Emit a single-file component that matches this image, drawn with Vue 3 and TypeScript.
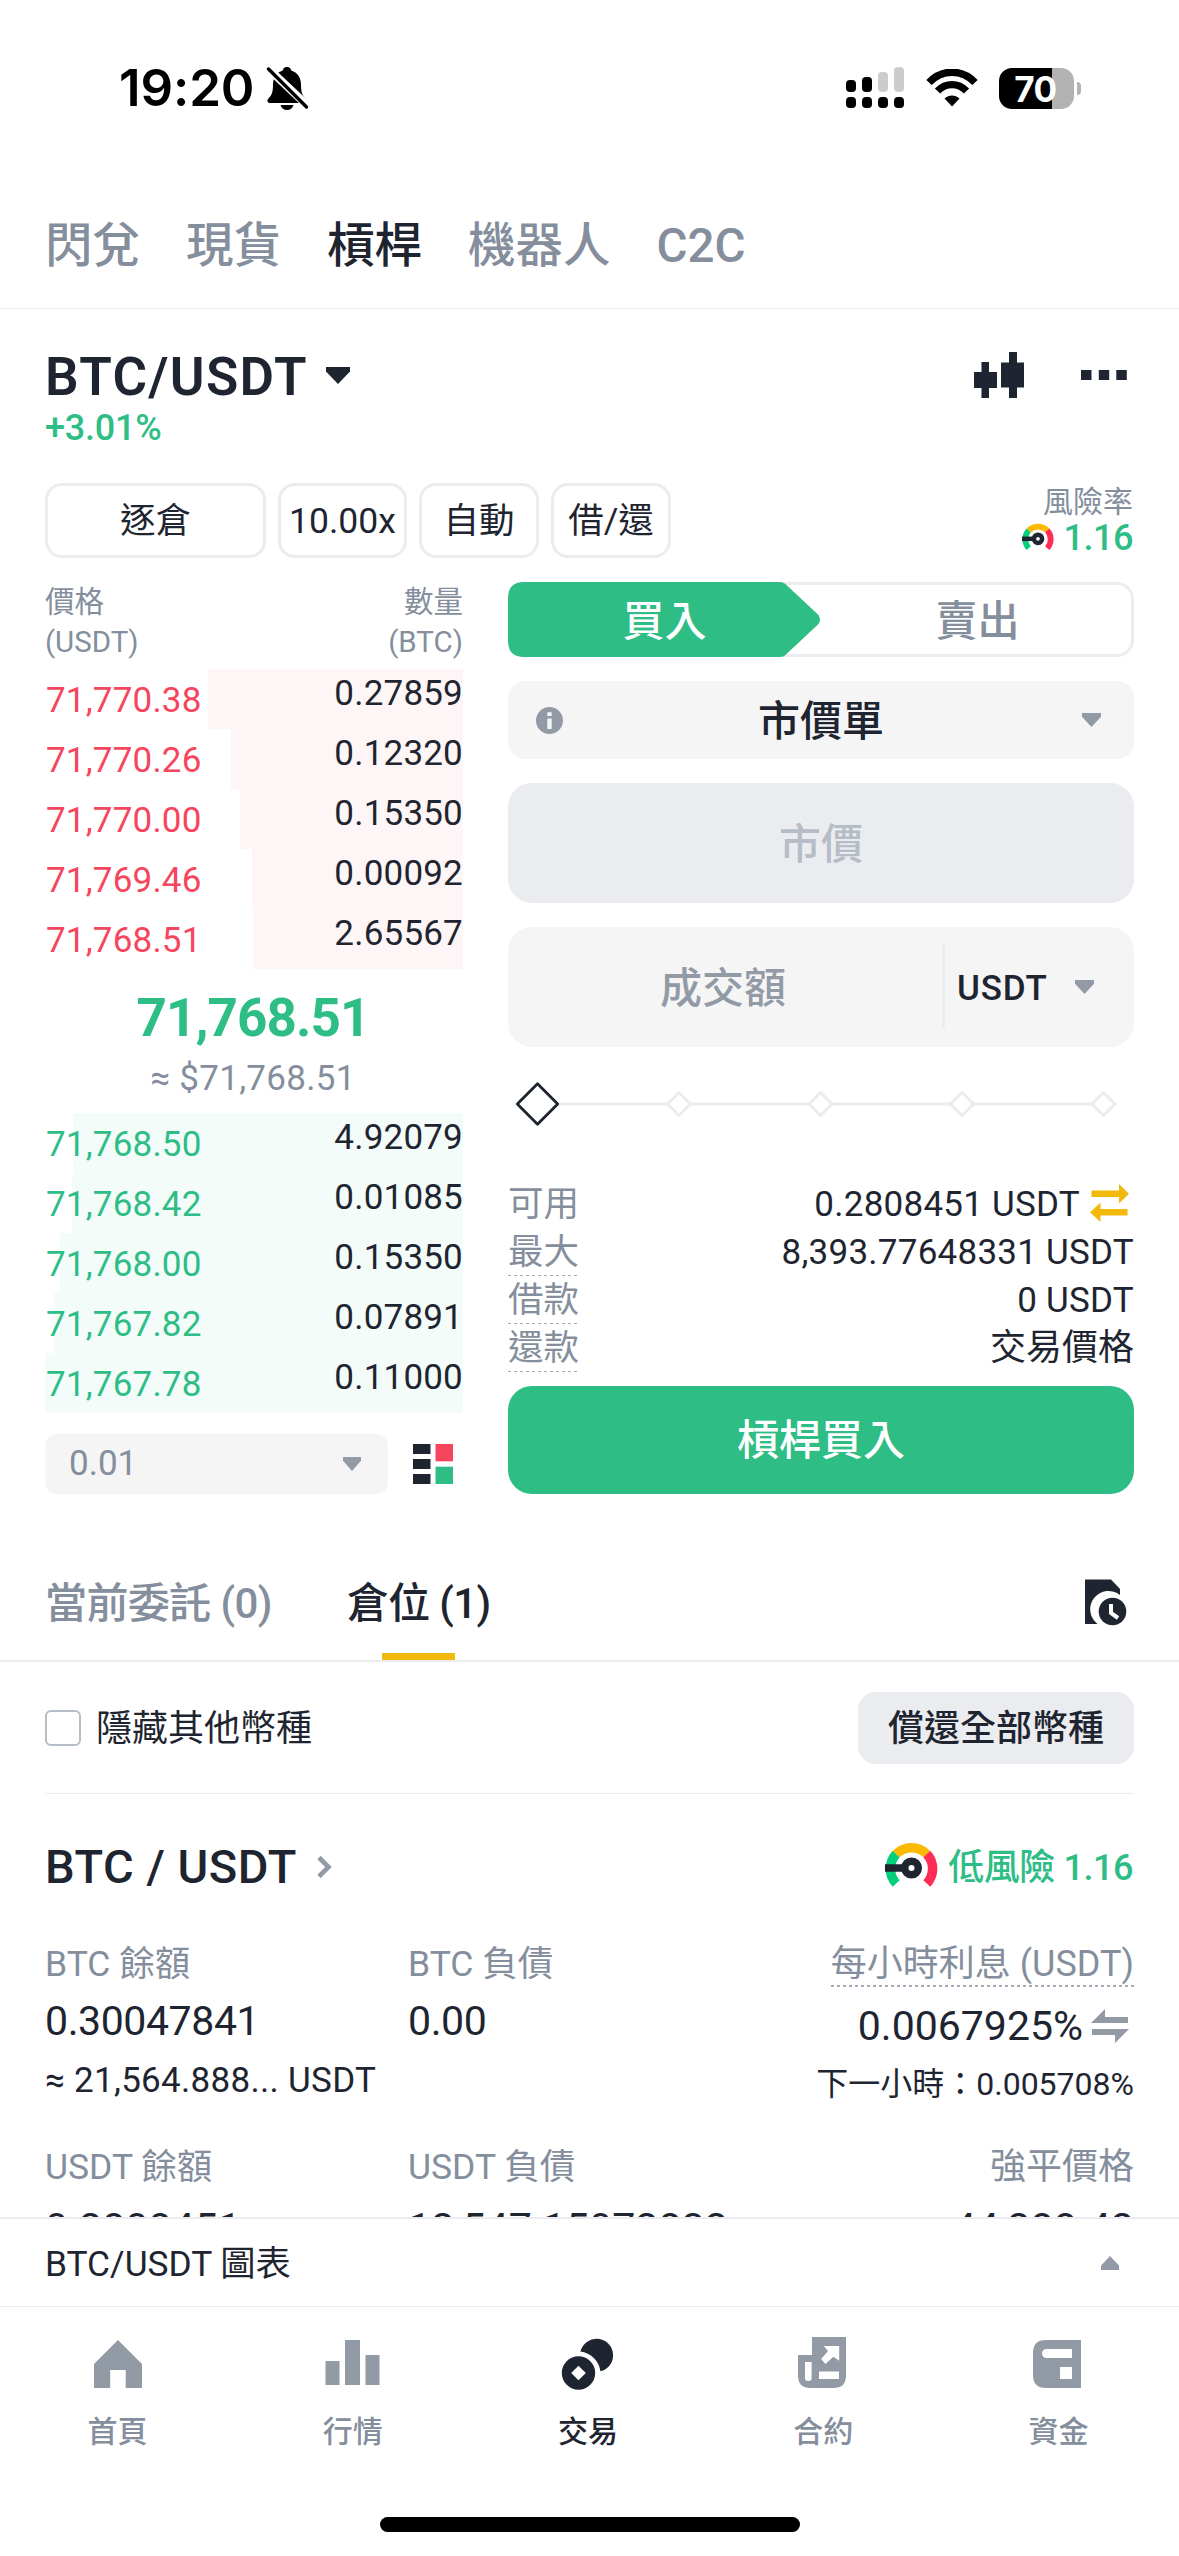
<script setup lang="ts">
interface BookRow {
  price: string
  qty: string
  depth: number
}

const navTabs = ['閃兌', '現貨', '槓桿', '機器人', 'C2C']

// depth is the width of the shaded bar, in pixels from the right edge of the book
const asks: BookRow[] = [
  { price: '71,770.38', qty: '0.27859', depth: 255 },
  { price: '71,770.26', qty: '0.12320', depth: 232 },
  { price: '71,770.00', qty: '0.15350', depth: 223 },
  { price: '71,769.46', qty: '0.00092', depth: 211 },
  { price: '71,768.51', qty: '2.65567', depth: 210 },
]
const bids: BookRow[] = [
  { price: '71,768.50', qty: '4.92079', depth: 390 },
  { price: '71,768.42', qty: '0.01085', depth: 391 },
  { price: '71,768.00', qty: '0.15350', depth: 403 },
  { price: '71,767.82', qty: '0.07891', depth: 409 },
  { price: '71,767.78', qty: '0.11000', depth: 418 },
]

const stops = [171, 312.5, 454, 595.5]
</script>

<template>
  <div class="screen" lang="zh-TW">
    <header class="status">
      <div class="clock">
        <span class="time">19:20</span>
        <svg class="bell" width="42" height="44" viewBox="0 0 42 44">
          <path d="M21 1c2.600 0 4 1.600 4.300 3.600C31.500 6.600 35 12 35 18.500c0 8 1.500 11 4.500 14 2 2 1 4.500-1.500 4.500H4C1.500 37 .5 34.500 2.500 32.500c3-3 4.500-6 4.500-14C7 12 10.500 6.600 16.700 4.600 17 2.600 18.400 1 21 1z" fill="#000" />
          <path d="M14.500 39h13c-.8 3-3.300 5-6.500 5s-5.700-2-6.500-5z" fill="#000" />
          <path d="M0 .5 42 40" stroke="#fff" stroke-width="8" />
          <path d="M2.500 3 40.500 41" stroke="#000" stroke-width="3.400" stroke-linecap="round" />
        </svg>
      </div>
      <div class="status-icons">
        <svg width="58" height="42" viewBox="0 0 58 42">
          <g fill="#000">
            <rect x="0" y="13" width="10" height="12" rx="4" />
            <rect x="16" y="10" width="10" height="15" rx="4" />
            <rect x="0" y="30" width="10" height="11" rx="4" />
            <rect x="16" y="30" width="10" height="11" rx="4" />
            <rect x="32" y="30" width="10" height="11" rx="4" />
            <rect x="48" y="30" width="10" height="11" rx="4" />
          </g>
          <g fill="#ccc">
            <rect x="32" y="5" width="10" height="20" rx="4" />
            <rect x="48" y="0" width="10" height="25" rx="4" />
          </g>
        </svg>
        <svg class="wifi" width="52" height="38" viewBox="0 0 52 38">
          <g fill="none" stroke="#000" stroke-width="7.400">
            <path d="M3 13.500C16-.2 36-.2 49 13.500" />
            <path d="M11.500 22C20 13.500 32 13.500 40.500 22" />
          </g>
          <path d="M26 37.500 18.500 29.500C23 25.500 29 25.500 33.500 29.500z" fill="#000" />
        </svg>
        <div class="battery"><span>70</span></div>
        <i class="nub" />
      </div>
    </header>

    <nav class="nav">
      <span v-for="t in navTabs" :key="t" :class="{ on: t === '槓桿' }">{{ t }}</span>
    </nav>

    <section class="pair">
      <h1>BTC/USDT</h1>
      <svg class="pair-caret" width="24" height="17" viewBox="0 0 24 17"><path d="M0 0h24v4.500L12 17 0 4.500z" fill="#1e2530" /></svg>
      <svg class="candles" width="50" height="46" viewBox="0 0 50 46">
        <path d="M0 20h7.500V10H15v10h8v16h-8v10H7.500V36H0zM27 10.500h8V0h8v10.500h7v25h-7V46h-8V35.500h-8z" fill="#1e2530" />
      </svg>
      <svg class="dots" width="46" height="10" viewBox="0 0 46 10"><path d="M0 0h10.500v10H0zM17.800 0h10.400v10H17.800zM35.300 0h10.500v10H35.300z" fill="#1e2530" /></svg>
    </section>
    <div class="change">+3.01%</div>

    <section class="controls">
      <button class="c1">逐倉</button>
      <button class="c2">10.00x</button>
      <button class="c3">自動</button>
      <button class="c4">借/還</button>
      <div class="risk">
        <span class="risk-label">風險率</span>
        <span class="risk-value">
          <svg width="32" height="28" viewBox="0 0 53 46">
            <g fill="none" stroke-width="9.500">
              <path d="M11.200 41.500A21.700 21.700 0 0 1 11.200 12" stroke="#03cf7a" />
              <path d="M11.200 12A21.700 21.700 0 0 1 41.800 12" stroke="#fcb900" />
              <path d="M41.800 12A21.700 21.700 0 0 1 41.800 41.500" stroke="#ff2d55" />
            </g>
            <path d="M0 26h20" stroke="#1e2530" stroke-width="7.500" />
            <circle cx="26.500" cy="26" r="6.800" fill="#fff" stroke="#1e2530" stroke-width="7.500" />
          </svg>
          <b>1.16</b>
        </span>
      </div>
    </section>

    <main class="trade">
      <section class="book">
        <div class="book-head">
          <div>價格<br>(USDT)</div>
          <div class="right">數量<br>(BTC)</div>
        </div>
        <div v-for="r in asks" :key="r.price" class="row ask">
          <i class="depth" :style="{ width: r.depth + 'px' }" />
          <span class="price">{{ r.price }}</span>
          <span class="qty">{{ r.qty }}</span>
        </div>
        <div class="mid">
          <strong>71,768.51</strong>
          <span>≈ $71,768.51</span>
        </div>
        <div v-for="r in bids" :key="r.price" class="row bid">
          <i class="depth" :style="{ width: r.depth + 'px' }" />
          <span class="price">{{ r.price }}</span>
          <span class="qty">{{ r.qty }}</span>
        </div>
        <div class="book-foot">
          <div class="tick">
            <span>0.01</span>
            <svg width="18" height="14" viewBox="0 0 24 17" preserveAspectRatio="none"><path d="M0 0h24v4.500L12 17 0 4.500z" fill="#929aa5" /></svg>
          </div>
          <svg class="layout" width="40" height="40" viewBox="0 0 40 40">
            <path d="M0 0h17.500v10H0zM0 15h17.500v10H0zM0 30h17.500v10H0z" fill="#1e2530" />
            <path d="M22.500 0H40v17.300H22.500z" fill="#f6465d" />
            <path d="M22.500 22.700H40V40H22.500z" fill="#2ebd85" />
          </svg>
        </div>
      </section>

      <section class="form">
        <div class="side">
          <svg class="side-bg" width="313" height="75" viewBox="0 0 313 75">
            <path d="M16 0H272q4 0 7 3.500L310.500 33q3 4.500 0 9L279 71.500q-3 3.500-7 3.500H16Q0 75 0 59V16Q0 0 16 0z" fill="#2ebd85" />
          </svg>
          <span class="buy">買入</span>
          <span class="sell">賣出</span>
        </div>
        <div class="type">
          <svg width="27" height="27" viewBox="0 0 27 27">
            <circle cx="13.500" cy="13.500" r="13.500" fill="#929aa5" />
            <path d="M11.300 5.200h4.400v3.800h-4.400zM11.300 11.500h4.400v10.500h-4.400z" fill="#f5f5f5" />
          </svg>
          <span>市價單</span>
          <svg width="19" height="14" viewBox="0 0 24 17" preserveAspectRatio="none"><path d="M0 0h24v4.500L12 17 0 4.500z" fill="#929aa5" /></svg>
        </div>
        <div class="market">市價</div>
        <div class="amount">
          <span class="amount-hint">成交額</span>
          <span class="unit">USDT</span>
          <svg width="19" height="14" viewBox="0 0 24 17" preserveAspectRatio="none"><path d="M0 0h24v4.500L12 17 0 4.500z" fill="#929aa5" /></svg>
        </div>
        <svg class="slider" width="626" height="60" viewBox="0 0 626 60">
          <path d="M29 30H595" stroke="#eaecef" stroke-width="3" />
          <path v-for="x in stops" :key="x" :d="`M${x} 18.500l11.500 11.500l-11.500 11.500l-11.500-11.500z`" fill="#fff" stroke="#eaecef" stroke-width="3" stroke-linejoin="round" />
          <path d="M29.500 9.800 49.700 30 29.500 50.200 9.300 30z" fill="#fff" stroke="#1e2530" stroke-width="2.800" stroke-linejoin="round" />
        </svg>
        <dl class="info">
          <div>
            <dt>可用</dt>
            <dd>
              0.2808451 USDT
              <svg width="39" height="38" viewBox="0 0 39 38"><path d="M1.500 6.500H29V0l10 9.700L29 19.500V13H1.500zM37.500 31.500H10.500V38L0 28.200l10.500-9.700V25h27z" fill="#f0b90b" /></svg>
            </dd>
          </div>
          <div><dt class="hint">最大</dt><dd>8,393.77648331 USDT</dd></div>
          <div><dt class="hint">借款</dt><dd>0 USDT</dd></div>
          <div><dt class="hint">還款</dt><dd class="zh">交易價格</dd></div>
        </dl>
        <button class="submit">槓桿買入</button>
      </section>
    </main>

    <nav class="orders">
      <span class="otab">當前委託 (0)</span>
      <span class="otab active">倉位 (1)</span>
      <svg width="42" height="47" viewBox="0 0 42 47">
        <path d="M0 .5H26L35 10v6A16.500 16.500 0 0 0 12 44.500L12.500 45H0z" fill="#1e2530" />
        <circle cx="27.500" cy="32.500" r="13.800" fill="#1e2530" />
        <path d="M26 25v9l7 5" fill="none" stroke="#fff" stroke-width="4" />
      </svg>
    </nav>

    <section class="filter">
      <i class="check" />
      <span>隱藏其他幣種</span>
      <button>償還全部幣種</button>
    </section>

    <section class="position">
      <div class="ptitle">
        <h2>BTC / USDT</h2>
        <svg class="chev" width="15" height="24" viewBox="0 0 15 24"><path d="M2 2.500 11.500 12 2 21.500" fill="none" stroke="#929aa5" stroke-width="4.600" /></svg>
        <svg class="gauge" width="53" height="46" viewBox="0 0 53 46">
          <g fill="none" stroke-width="9.500">
            <path d="M11.200 41.500A21.700 21.700 0 0 1 11.200 12" stroke="#03cf7a" />
            <path d="M11.200 12A21.700 21.700 0 0 1 41.800 12" stroke="#fcb900" />
            <path d="M41.800 12A21.700 21.700 0 0 1 41.800 41.500" stroke="#ff2d55" />
          </g>
          <path d="M0 26h20" stroke="#1e2530" stroke-width="7.500" />
          <circle cx="26.500" cy="26" r="6.800" fill="#fff" stroke="#1e2530" stroke-width="7.500" />
        </svg>
        <span class="low">低風險 1.16</span>
      </div>
      <div class="cells">
        <div class="cell">
          <div class="lab">BTC 餘額</div>
          <div class="val">0.30047841</div>
          <div class="sub">≈ 21,564.888... USDT</div>
        </div>
        <div class="cell">
          <div class="lab">BTC 負債</div>
          <div class="val">0.00</div>
        </div>
        <div class="cell end">
          <div class="lab dotted">每小時利息 (USDT)</div>
          <div class="val rate">
            0.0067925%
            <svg width="38" height="34" viewBox="0 0 38 34"><path d="M0 14 14 0v8h23v6zM1 20h37L24 34v-8H1z" fill="#929aa5" /></svg>
          </div>
          <div class="sub next">下一小時：0.005708%</div>
        </div>
      </div>
      <div class="cells second">
        <div class="cell">
          <div class="lab">USDT 餘額</div>
          <div class="val">0.2808451</div>
        </div>
        <div class="cell">
          <div class="lab">USDT 負債</div>
          <div class="val">12,547.15072832</div>
        </div>
        <div class="cell end">
          <div class="lab">強平價格</div>
          <div class="val">44,288.42</div>
        </div>
      </div>
    </section>

    <div class="chart-bar">
      <span>BTC/USDT 圖表</span>
      <svg width="18" height="14" viewBox="0 0 24 17" preserveAspectRatio="none"><path d="M0 17h24v-5.500L12 0 0 11.500z" fill="#929aa5" /></svg>
    </div>

    <footer class="tabbar">
      <div class="tab">
        <svg width="60" height="60" viewBox="0 0 60 60"><path d="M30 6 54 30v24H37.700V36H22.200v18H6V30z" fill="#929aa5" /></svg>
        <span>首頁</span>
      </div>
      <div class="tab">
        <svg width="60" height="60" viewBox="0 0 60 60"><path d="M2.500 27H16.500v24H2.500zM22 6h15v45H22zM42.500 21h14v30h-14z" fill="#929aa5" /></svg>
        <span>行情</span>
      </div>
      <div class="tab now">
        <svg width="60" height="60" viewBox="0 0 60 60">
          <path d="M22.500 17.500A16.500 16.500 0 1 1 42.500 37.300A23.500 23.500 0 0 0 22.500 17.500z" fill="#1e2530" />
          <circle cx="20.500" cy="39" r="16.700" fill="#1e2530" />
          <path d="M20.500 31.700 27.800 39 20.500 46.300 13.200 39z" fill="#fff" />
        </svg>
        <span>交易</span>
      </div>
      <div class="tab">
        <svg width="60" height="60" viewBox="0 0 60 60">
          <path d="M19 3H53V41.500Q53 54 40.500 54H17.500Q5 54 5 41.500V21H19z" fill="#929aa5" />
          <path d="M12 28h6.600v16.500a3.300 2.500 0 0 1-6.600 0zM26 37.500h20V45H26zM30.800 12H46.200V26.700L40.400 22.700 32.400 30 28.200 25 35 17z" fill="#fff" />
        </svg>
        <span>合約</span>
      </div>
      <div class="tab">
        <svg width="60" height="60" viewBox="0 0 60 60">
          <path d="M18 6H53V54H18Q5 54 5 41V19Q5 6 18 6z" fill="#929aa5" />
          <path d="M18.500 15H44v9H18.500a4.500 4.500 0 0 1 0-9zM32 33H44V45H32z" fill="#fff" />
        </svg>
        <span>資金</span>
      </div>
    </footer>
    <i class="home-bar" />
  </div>
</template>

<style>
html,
body {
  margin: 0;
  background: #fff;
}
</style>

<style scoped>
.screen {
  width: 1179px;
  height: 2556px;
  box-sizing: border-box;
  overflow: hidden;
  display: flex;
  flex-direction: column;
  background: #fff;
  color: #1e2530;
  font-family: Roboto, 'Noto Sans CJK TC', sans-serif;
  font-size: 35px;
}
.screen > * {
  flex: none;
}
.screen * {
  box-sizing: border-box;
  white-space: nowrap;
}
h1,
h2,
dl,
dt,
dd {
  margin: 0;
  font-weight: 500;
}
svg {
  display: block;
  flex: none;
}
button {
  font: inherit;
  color: inherit;
  padding: 0;
  border: 0;
  background: none;
}
i {
  display: block;
  flex: none;
}

.status {
  height: 176px;
  padding: 0 98px 0 119px;
  display: flex;
  align-items: center;
  justify-content: space-between;
}
.clock,
.status-icons {
  display: flex;
  align-items: center;
}
.time {
  width: 147px;
  font: 600 51px/60px Inter, sans-serif;
  color: #000;
  letter-spacing: -0.1px;
}
.wifi {
  margin-left: 22px;
}
.battery {
  width: 75px;
  height: 41px;
  margin-left: 21px;
  border-radius: 13px;
  background: linear-gradient(90deg, #000 53px, #b2b2b2 53px);
  display: flex;
  justify-content: center;
  padding-right: 2px;
}
.battery span {
  font: 700 35px/42px Inter, sans-serif;
  color: #fff;
  letter-spacing: -0.5px;
}
.nub {
  width: 4px;
  height: 13px;
  margin-left: 3px;
  border-radius: 0 4px 4px 0;
  background: #b2b2b2;
}

.nav {
  height: 134px;
  padding: 5px 45px 0;
  display: flex;
  align-items: center;
  gap: 46px;
  font-size: 47.500px;
  font-weight: 500;
  line-height: 60px;
  color: #848e9c;
  background: linear-gradient(#eaecef, #eaecef) left 0 bottom 1px / 100% 1px no-repeat;
}
.nav .on {
  color: #1e2530;
}

.pair {
  height: 60px;
  margin: 37px 52px 0 45px;
  display: flex;
  align-items: center;
}
.pair h1 {
  width: 281px;
  font-size: 53px;
  font-weight: 600;
  line-height: 60px;
  letter-spacing: 1.300px;
}
.pair svg {
  margin-bottom: 4px;
}
.pair .candles {
  margin-left: auto;
}
.pair .dots {
  margin-left: 57px;
}
.change {
  height: 36px;
  margin: 3px 45px 0;
  font-size: 36px;
  font-weight: 500;
  line-height: 36px;
  letter-spacing: -0.2px;
  color: #2ebd85;
}

.controls {
  height: 75px;
  margin: 37px 45px 0;
  display: flex;
  gap: 12px;
}
.controls button {
  height: 75px;
  border: 3px solid #eaecef;
  border-radius: 17px;
  padding-top: 2px;
  line-height: 67px;
  font-size: 35.500px;
}
.controls .c1 { width: 221px; }
.controls .c2 { width: 129px; }
.controls .c3 { width: 120px; }
.controls .c4 { width: 120px; }
.risk {
  margin-left: auto;
  display: flex;
  flex-direction: column;
  align-items: flex-end;
  padding: 1px 1px 0 0;
}
.risk-label {
  height: 36px;
  font-size: 30px;
  line-height: 36px;
  color: #848e9c;
}
.risk-value {
  height: 36px;
  display: flex;
  align-items: center;
  gap: 10px;
  font-size: 36px;
  line-height: 37px;
  color: #2ebd85;
}
.risk-value svg {
  margin-bottom: 2px;
}
.risk-value b {
  font-weight: 500;
  letter-spacing: -0.5px;
}

.trade {
  height: 912px;
  margin: 24px 45px 0;
  display: flex;
  gap: 45px;
}
.book {
  width: 418px;
}
.book-head {
  height: 87px;
  padding-top: 1px;
  display: flex;
  justify-content: space-between;
  font-size: 29.500px;
  line-height: 39.500px;
  color: #848e9c;
}
.right {
  text-align: right;
}
.row {
  position: relative;
  height: 60px;
  display: flex;
  justify-content: space-between;
  padding: 0 0 0 1px;
  line-height: 63px;
  letter-spacing: 0.2px;
}
.row span {
  position: relative;
}
.row .qty {
  height: 48px;
  line-height: 50px;
}
.depth {
  position: absolute;
  top: 0;
  right: 0;
  height: 60px;
}
.ask .depth { background: #fef5f6; }
.bid .depth { background: #f3fcf9; }
.ask .price { color: #f6465d; }
.bid .price { color: #2ebd85; }
.mid {
  height: 144px;
  padding: 19px 2px 0 0;
  display: flex;
  flex-direction: column;
  align-items: center;
  gap: 13px;
}
.mid strong {
  font-size: 53px;
  line-height: 60px;
  font-weight: 700;
  letter-spacing: -0.9px;
  color: #2ebd85;
}
.mid span {
  line-height: 36px;
  letter-spacing: 0.3px;
  color: #848e9c;
}
.book-foot {
  margin-top: 21px;
  display: flex;
  align-items: center;
}
.tick {
  width: 343px;
  height: 60px;
  padding: 0 27px 0 24px;
  border-radius: 12px;
  background: #f5f5f5;
  display: flex;
  align-items: center;
  justify-content: space-between;
  color: #848e9c;
  line-height: 62px;
}
.layout {
  margin-left: 25px;
}

.form {
  width: 626px;
  display: flex;
  flex-direction: column;
}
.side {
  position: relative;
  height: 75px;
  border-radius: 17px;
  box-shadow: inset 0 0 0 3px #eaecef;
  display: flex;
  font-size: 42px;
  font-weight: 500;
  line-height: 79px;
  text-align: center;
}
.side-bg {
  position: absolute;
  left: 0;
  top: 0;
}
.side span {
  position: relative;
  width: 313px;
}
.buy { color: #fff; }
.sell { color: #848e9c; }
.type {
  height: 78px;
  margin-top: 24px;
  padding: 0 33px 0 28px;
  border-radius: 17px;
  background: #f5f5f5;
  display: flex;
  align-items: center;
  justify-content: space-between;
  font-size: 42px;
  font-weight: 500;
  line-height: 78px;
}
.type span {
  padding: 3px 3px 0 0;
}
.market {
  height: 120px;
  margin-top: 24px;
  border-radius: 24px;
  background: #eaecef;
  text-align: center;
  font-size: 42px;
  font-weight: 500;
  line-height: 124px;
  color: #b7bdc6;
}
.amount {
  height: 120px;
  margin-top: 24px;
  padding-right: 39px;
  border-radius: 24px;
  background: #f5f5f5;
  display: flex;
  align-items: center;
}
.amount-hint {
  width: 434px;
  padding: 3px 4px 0 0;
  text-align: center;
  font-size: 42px;
  font-weight: 500;
  line-height: 120px;
  color: #929aa5;
}
.unit {
  width: 133px;
  height: 84px;
  padding-left: 12px;
  border-left: 3px solid #eaecef;
  font-weight: 500;
  line-height: 88px;
  letter-spacing: 0.8px;
}
.slider {
  margin-top: 27px;
}
.info {
  margin-top: 46px;
}
.info > div {
  height: 48px;
  display: flex;
  justify-content: space-between;
}
.info dt {
  height: 48px;
  font-size: 35.500px;
  font-weight: 400;
  line-height: 48px;
  color: #848e9c;
}
.info .hint {
  background: repeating-linear-gradient(90deg, #a3abb6 0 3px, transparent 3px 6px) left bottom / 100% 1.500px no-repeat;
}
.info dd {
  display: flex;
  align-items: center;
  font-weight: 400;
  line-height: 51px;
  letter-spacing: 0.25px;
}
.info dd svg {
  margin: 0 5px 2px 10px;
}
.info .zh {
  font-size: 36px;
  letter-spacing: 0;
}
.submit {
  height: 108px;
  margin-top: 14px;
  border-radius: 24px;
  padding-top: 2px;
  background: #2ebd85;
  color: #fff;
  font-size: 42px;
  font-weight: 500;
  line-height: 106px;
}

.orders {
  height: 168px;
  padding: 0 52px 0 45px;
  border-bottom: 2px solid #eaecef;
  display: flex;
}
.otab {
  height: 166px;
  padding-top: 80px;
  display: flex;
  flex-direction: column;
  align-items: center;
  justify-content: space-between;
  font-size: 42px;
  font-weight: 500;
  line-height: 60px;
  letter-spacing: -0.6px;
  color: #848e9c;
}
.otab.active {
  margin-left: 75px;
  color: #1e2530;
}
.otab.active::after {
  content: '';
  width: 73px;
  height: 7px;
  background: #f0b90b;
}
.orders svg {
  margin: 85px 0 0 auto;
}

.filter {
  height: 132px;
  margin: 0 45px;
  border-bottom: 1px solid #eaecef;
  display: flex;
  align-items: center;
  font-size: 36px;
  line-height: 74px;
}
.filter span {
  padding-top: 2px;
}
.check {
  width: 36px;
  height: 36px;
  margin-right: 15px;
  border: 2px solid #b7bdc6;
  border-radius: 6px;
}
.filter button {
  width: 276px;
  height: 72px;
  margin-left: auto;
  border-radius: 18px;
  background: #eaecef;
  font-weight: 500;
}

.position {
  height: 423px;
  padding: 43px 45px 0;
  overflow: hidden;
}
.ptitle {
  height: 60px;
  display: flex;
  align-items: center;
}
.ptitle h2 {
  width: 272px;
  font-size: 47px;
  line-height: 60px;
  letter-spacing: 0.5px;
}
.gauge {
  margin: 0 0 4px auto;
}
.low {
  margin-left: 10px;
  padding: 1px 1px 0 0;
  font-size: 36px;
  font-weight: 500;
  line-height: 60px;
  letter-spacing: -0.45px;
  color: #2ebd85;
}
.cells {
  margin-top: 45px;
  display: grid;
  grid-template-columns: 363px 363px 1fr;
}
.cells.second {
  margin-top: 40px;
}
.cell {
  display: flex;
  flex-direction: column;
  align-items: flex-start;
}
.cell.end {
  align-items: flex-end;
}
.lab {
  height: 45px;
  font-size: 35.500px;
  line-height: 44px;
  color: #848e9c;
}
.end .lab {
  font-size: 36px;
}
.lab.dotted {
  background: repeating-linear-gradient(90deg, #a3abb6 0 3px, transparent 3px 6px) left bottom / 100% 2px no-repeat;
}
.val {
  height: 44px;
  margin-top: 12px;
  font-size: 41px;
  line-height: 44px;
  letter-spacing: -0.4px;
}
.second .val {
  margin-top: 16px;
  letter-spacing: 0.1px;
}
.val.rate {
  margin-top: 17px;
  padding-right: 5px;
  display: flex;
  align-items: center;
  gap: 8px;
  letter-spacing: 0;
}
.sub {
  height: 40px;
  margin-top: 17px;
  line-height: 41px;
  letter-spacing: 0.3px;
}
.next {
  font-size: 32px;
  line-height: 39px;
  letter-spacing: 0;
}

.chart-bar {
  height: 90px;
  padding: 0 60px 0 45px;
  border-top: 2px solid #eaecef;
  border-bottom: 1px solid #eaecef;
  display: flex;
  align-items: center;
  justify-content: space-between;
  line-height: 88px;
}
.chart-bar span {
  padding-top: 3px;
  font-size: 35.300px;
}
.tabbar {
  height: 210px;
  padding: 27px 3px 0 0;
  display: flex;
}
.tab {
  flex: 1;
  display: flex;
  flex-direction: column;
  align-items: center;
  font-size: 30px;
  font-weight: 500;
  line-height: 40px;
  color: #848e9c;
}
.tab span {
  margin-top: 18px;
}
.tab.now {
  color: #1e2530;
}
.home-bar {
  width: 420px;
  height: 15px;
  margin: 0 auto;
  border-radius: 8px;
  background: #000;
}
</style>
